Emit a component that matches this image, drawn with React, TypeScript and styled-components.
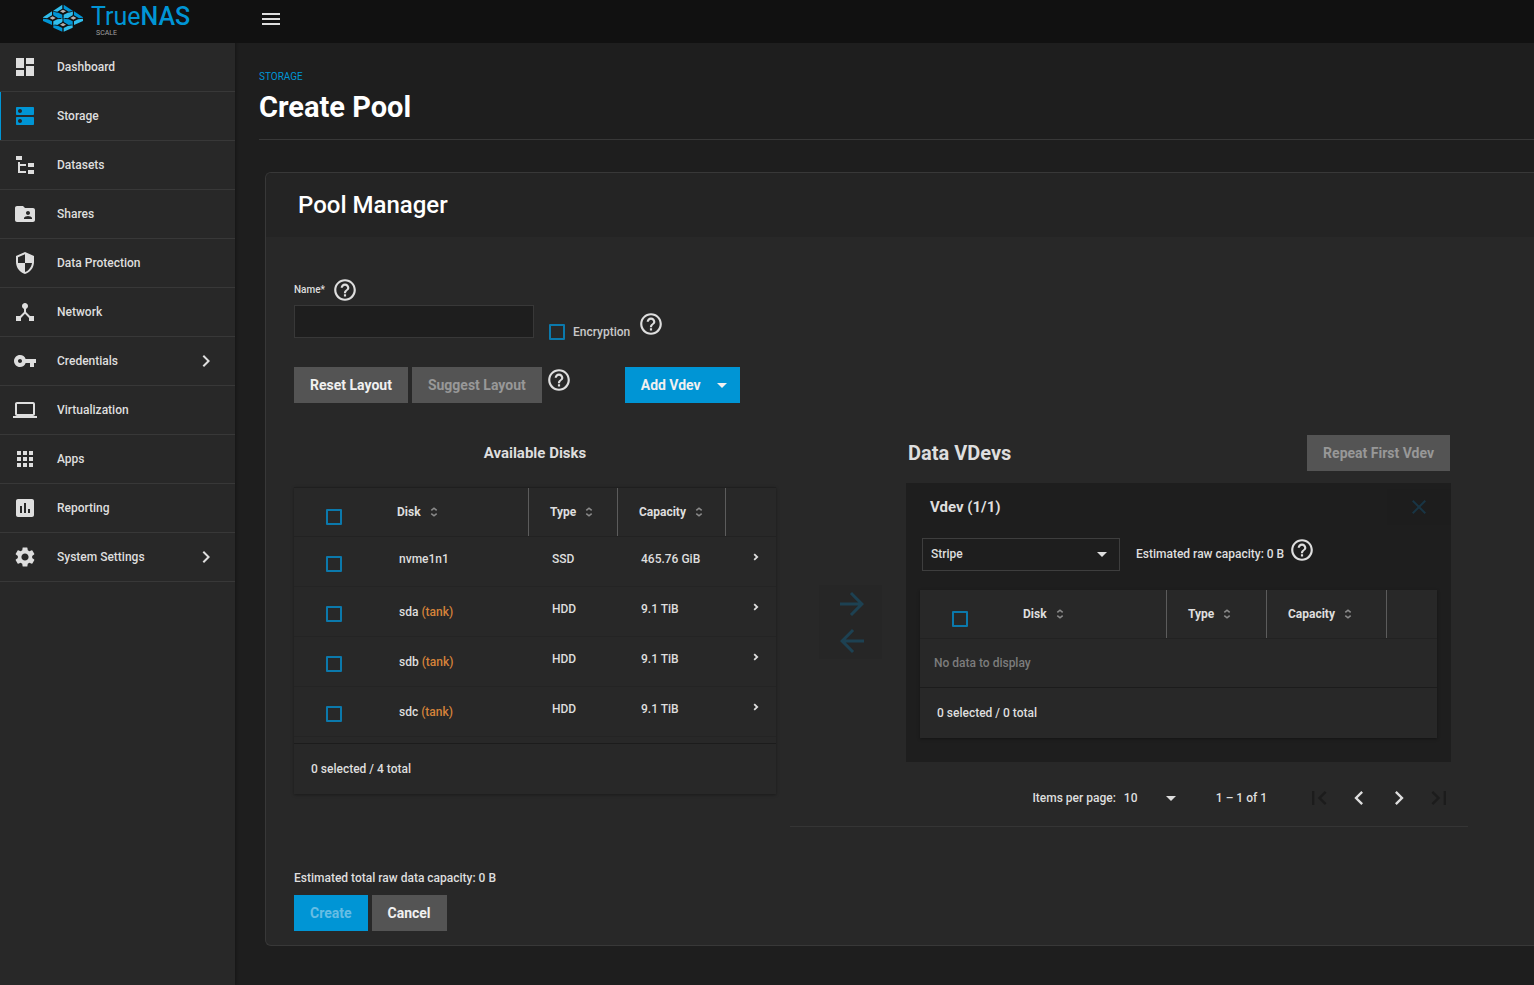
import React from 'react';
import styled, { createGlobalStyle, css } from 'styled-components';
import {
  MdApps,
  MdArrowBack,
  MdArrowDropDown,
  MdArrowForward,
  MdAssessment,
  MdChevronLeft,
  MdChevronRight,
  MdClose,
  MdDashboard,
  MdDeviceHub,
  MdDns,
  MdFirstPage,
  MdFolderShared,
  MdHelpOutline,
  MdLaptop,
  MdLastPage,
  MdMenu,
  MdSecurity,
  MdSettings,
  MdVpnKey,
} from 'react-icons/md';

const color = {
  bg1: '#1e1e1e',
  bg2: '#282828',
  bar: '#111111',
  line: '#383838',
  primary: '#0095d5',
  fg1: '#ffffff',
  fg2: '#dedede',
  button: '#545454',
  orange: '#d6833a',
};

const GlobalStyle = createGlobalStyle`
  *, *::before, *::after { box-sizing: border-box; }
  body {
    margin: 0;
    background: ${color.bg1};
    color: ${color.fg2};
    font: 500 12px/20px Roboto, "Liberation Sans", sans-serif;
    overflow-x: hidden;
  }
  button, input, select { font: inherit; color: inherit; }
  h1, h2, h3, p { margin: 0; }
`;

const Page = styled.div`
  display: flex;
  min-height: 100vh;
`;

const Sidebar = styled.aside`
  flex: none;
  width: 235px;
  background: ${color.bg2};
  box-shadow: 1px 0 3px rgba(0, 0, 0, 0.3);
`;

const LogoBar = styled.div`
  display: flex;
  height: 43px;
  padding: 4px 0 0 43px;
  gap: 8px;
  background: ${color.bar};
`;

const LogoMark = styled.svg`
  width: 40px;
  height: 28px;
`;

const Wordmark = styled.div`
  display: flex;
  flex-direction: column;
  color: ${color.primary};
  font-size: 25px;
  line-height: 26px;
  font-weight: 400;

  b { font-weight: 500; }
  small {
    padding-left: 5px;
    color: #a0a0a0;
    font-size: 7px;
    line-height: 6px;
  }
`;

const NavList = styled.ul`
  margin: 0;
  padding: 0;
  list-style: none;
`;

const NavLink = styled.a<{ $active?: boolean }>`
  display: flex;
  align-items: center;
  height: 49px;
  padding: 0 17px 0 13px;
  border-bottom: 1px solid ${color.line};
  box-shadow: ${(p) => (p.$active ? `inset 1px 0 ${color.primary}` : 'none')};
  color: ${color.fg2};
  text-decoration: none;

  svg:first-child { color: ${(p) => (p.$active ? color.primary : color.fg2)}; }
  span { flex: 1; padding-left: 20px; }
`;

const Content = styled.div`
  flex: 1;
  min-width: 0;
`;

const TopBar = styled.header`
  display: flex;
  align-items: center;
  height: 43px;
  padding: 0 24px 5px;
  background: ${color.bar};
`;

const PlainButton = styled.button`
  display: inline-flex;
  align-items: center;
  justify-content: center;
  padding: 0;
  border: 0;
  background: none;
`;

const Main = styled.main`
  padding: 24px 0 38px 24px;
`;

const PageHeader = styled.div`
  padding-bottom: 12px;
  border-bottom: 1px solid ${color.line};
`;

const Crumb = styled.a`
  display: block;
  color: ${color.primary};
  font-size: 10px;
  font-weight: 400;
  line-height: 20px;
  text-decoration: none;
`;

const PageTitle = styled.h1`
  color: ${color.fg1};
  font-size: 29px;
  font-weight: 700;
  line-height: 36px;
  padding: 2px 0;
`;

const Card = styled.section`
  margin: 32px 0 0 6px;
  border: 1px solid ${color.line};
  border-right: 0;
  border-radius: 6px 0 0 6px;
  background: ${color.bg2};
  overflow: hidden;
`;

const CardTitle = styled.h2`
  padding: 0 32px;
  background: #242424;
  color: ${color.fg1};
  font-size: 24px;
  font-weight: 500;
  line-height: 64px;
`;

const CardBody = styled.form`
  padding: 40px 66px 14px 28px;
`;

const FieldRow = styled.div`
  display: flex;
  align-items: flex-start;
  gap: 15px;
  margin-bottom: 25px;
`;

const NameField = styled.div`
  width: 240px;
`;

const LabelRow = styled.div`
  display: flex;
  align-items: center;
  gap: 7px;
  height: 26px;
  margin-bottom: 2px;
  font-size: 10px;
`;

const HelpButton = styled(PlainButton)`
  width: 26px;
  height: 26px;
`;

const TextInput = styled.input`
  display: block;
  width: 100%;
  height: 33px;
  padding: 0 8px;
  border: 1px solid ${color.line};
  background: ${color.bg1};
`;

const EncryptionField = styled.div`
  display: flex;
  padding-top: 34px;
  gap: 8px;
`;

const CheckLabel = styled.label`
  display: flex;
  align-items: center;
  gap: 8px;
  padding-top: 11px;
  height: 31px;
  color: #c8c8c8;
`;

const Checkbox = styled.input.attrs({ type: 'checkbox' })`
  appearance: none;
  flex: none;
  display: block;
  width: 16px;
  height: 16px;
  margin: 0;
  border: 2px solid #0b79ac;
  border-radius: 1px;
  &:checked { background: ${color.primary}; }
`;

const ButtonRow = styled.div`
  display: flex;
  gap: 4px;
`;

const Button = styled.button<{ $primary?: boolean }>`
  display: inline-flex;
  align-items: center;
  gap: 8px;
  height: 36px;
  padding: 0 16px;
  border: 0;
  background: ${(p) => (p.$primary ? color.primary : color.button)};
  color: #f0f0f0;
  font-size: 14px;
  font-weight: 700;
  white-space: nowrap;
  &:disabled { color: ${(p) => (p.$primary ? '#66bde4' : '#989898')}; }
`;

const AddVdev = styled(Button)`
  margin-left: 49px;
  padding-right: 6px;
  gap: 9px;
`;

const LayoutGrid = styled.div`
  display: grid;
  grid-template-columns: minmax(0, 482fr) minmax(0, 678fr);
  align-items: start;
  gap: 14px;
  margin-top: 32px;
`;

const DisksTitle = styled.h3`
  margin-bottom: 16px;
  font-size: 15px;
  font-weight: 700;
  line-height: 36px;
  text-align: center;
`;

const TableCard = styled.div<{ $topLine?: boolean }>`
  border-top: ${(p) => (p.$topLine ? '1px solid #1f1f1f' : '0')};
  background: ${color.bg2};
  box-shadow: 0 1px 3px rgba(0, 0, 0, 0.35);
`;

const Table = styled.table`
  width: 100%;
  table-layout: fixed;
  border-collapse: separate;
  border-spacing: 0;
`;

const Col = styled.col<{ $w?: number }>`
  ${(p) => p.$w && css`width: ${p.$w}px;`}
`;

const Th = styled.th<{ $divided?: boolean }>`
  height: 49px;
  padding: 0 0 0 21px;
  border-bottom: 1px solid #222222;
  text-align: left;
  font-weight: 700;
  position: relative;
  ${(p) =>
    p.$divided &&
    css`
      &::after {
        content: '';
        position: absolute;
        top: 0;
        right: 0;
        width: 1px;
        height: 48px;
        background: #5c5c5c;
      }
    `}
`;

const SortButton = styled(PlainButton)`
  gap: 9px;
  color: ${color.fg2};
  svg { color: #8a8a8a; }
`;

const CheckTh = styled(Th)`
  padding: 21px 0 0 32px;
  vertical-align: top;
`;

const Td = styled.td<{ $tall?: boolean }>`
  height: 50px;
  padding: 11px 0 0 23px;
  border-bottom: 1px solid #242424;
  line-height: ${(p) => (p.$tall ? 28 : 22)}px;
  vertical-align: top;
`;

const CheckTd = styled(Td)`
  padding: 19px 0 0 32px;
`;

const EmptyTd = styled.td`
  height: 48px;
  padding: 0 14px;
  color: #7c7c7c;
`;

const InUse = styled.span`
  color: ${color.orange};
`;

const TableFooter = styled.div<{ $gap?: boolean }>`
  margin-top: ${(p) => (p.$gap ? 6 : 0)}px;
  padding: 0 17px;
  border-top: 1px solid #1c1c1c;
  line-height: 50px;
`;

const VdevSection = styled.div`
  display: flex;
  gap: 24px;
  padding-left: 29px;
  border-bottom: 1px solid #353535;
`;

const MoveButtons = styled.div`
  display: flex;
  flex-direction: column;
  align-self: flex-start;
  flex: none;
  width: 63px;
  margin-top: 150px;
  background: #262626;
`;

const MoveButton = styled(PlainButton)`
  height: 37px;
  padding-left: 2px;
  &:disabled { color: #1d4152; }
`;

const VdevColumn = styled.div`
  flex: 1;
  min-width: 0;
`;

const VdevHeader = styled.div`
  display: flex;
  justify-content: space-between;
  align-items: center;
  padding: 0 18px 0 2px;
  margin-bottom: 12px;
`;

const VdevTitle = styled.h3`
  font-size: 20px;
  font-weight: 700;
  line-height: 36px;
`;

const VdevPanel = styled.div`
  margin-right: 17px;
  padding: 6px 14px 24px;
  background: ${color.bg1};
`;

const PanelHead = styled.div`
  display: flex;
  justify-content: space-between;
  align-items: center;
  height: 36px;
  padding-left: 10px;
  margin-right: -14px;
`;

const PanelTitle = styled.h3`
  font-size: 15px;
  font-weight: 700;
`;

const RemoveButton = styled(PlainButton)`
  width: 64px;
  height: 36px;
  background: #1d1d1d;
  color: #193544;
`;

const PanelControls = styled.div`
  display: flex;
  align-items: center;
  margin: 12px 0 19px 2px;
`;

const SelectWrap = styled.div`
  position: relative;
  svg {
    position: absolute;
    top: 4px;
    right: 6px;
    pointer-events: none;
  }
`;

const Select = styled.select`
  appearance: none;
  display: block;
  width: 198px;
  height: 33px;
  padding: 0 8px;
  border: 1px solid #3e3e3e;
  border-radius: 0;
  background: transparent;
`;

const Capacity = styled.div`
  display: flex;
  align-items: center;
  gap: 5px;
  margin-left: 16px;
  button { margin-bottom: 8px; }
`;

const Paginator = styled.nav`
  display: flex;
  align-items: center;
  justify-content: flex-end;
  height: 56px;
  margin-top: 8px;
  padding-right: 9px;
`;

const PageSize = styled.label`
  display: flex;
  align-items: center;
  gap: 8px;
  margin-right: 33px;
`;

const PageSizeSelect = styled(Select)`
  width: 59px;
  height: 24px;
  padding: 0;
  border: 0;
`;

const PageSizeWrap = styled(SelectWrap)`
  svg { top: 0; right: 0; }
`;

const PageButton = styled(PlainButton)`
  width: 40px;
  height: 40px;
  &:disabled { color: #1c1c1c; }
`;

const PageRange = styled.span`
  margin-right: 32px;
`;

const Total = styled.p`
  margin-top: 41px;
  margin-bottom: 7px;
`;

const tiles = [
  [60, 22],
  [29, 42],
  [91, 42],
  [60, 62],
];

const Logo = () => (
  <LogoMark viewBox="0 0 120 84" aria-hidden="true">
    {tiles.map(([x, y]) => (
      <g key={`${x}-${y}`} transform={`translate(${x} ${y})`}>
        <path d="M-29-2L-2-20V-8L-17 1L-29-1Z" fill="#31beec" />
        <path d="M2-20L29-2V-1L17 1L2-8Z" fill="#0095d5" />
        <path d="M-29 2L-14 4L-2 10V21L-29 9Z" fill="#0095d5" />
        <path d="M29 2L14 4L2 10V21L29 9Z" fill="#31beec" />
        <path d="M0-7L13 0L0 7L-13 0Z" fill="#111111" />
        <path d="M0-5L9 0L0 5L-9 0Z" fill="#b4b0ae" />
      </g>
    ))}
  </LogoMark>
);

const DatasetsIcon = () => (
  <svg width="24" height="24" viewBox="0 0 24 24" fill="currentColor" aria-hidden="true">
    <path d="M3 3h6v4H3zM5 9h2v2h6v2H7v5h6v2H5zM15 10h6v4h-6zM15 17h6v4h-6z" />
  </svg>
);

const SortIcon = () => (
  <svg width="8" height="10" viewBox="0 0 8 10" fill="none" stroke="currentColor" strokeWidth="1.6" aria-hidden="true">
    <path d="M1.3 3.4L4 1.2L6.7 3.4M1.3 6.6L4 8.8L6.7 6.6" />
  </svg>
);

const ExpandIcon = () => (
  <svg width="6" height="8" viewBox="0 0 6 8" fill="none" stroke="currentColor" strokeWidth="1.8" aria-hidden="true">
    <path d="M1.2 1.2L4.2 4L1.2 6.8" />
  </svg>
);

const ExpandButton = styled(PlainButton)`
  width: 14px;
  height: 18px;
  vertical-align: top;
`;

const Help = ({ about }: { about: string }) => (
  <HelpButton type="button" aria-label={`Help: ${about}`}>
    <MdHelpOutline size={26} />
  </HelpButton>
);

const navItems = [
  { label: 'Dashboard', icon: MdDashboard },
  { label: 'Storage', icon: MdDns, active: true },
  { label: 'Datasets', icon: DatasetsIcon },
  { label: 'Shares', icon: MdFolderShared },
  { label: 'Data Protection', icon: MdSecurity },
  { label: 'Network', icon: MdDeviceHub },
  { label: 'Credentials', icon: MdVpnKey, expandable: true },
  { label: 'Virtualization', icon: MdLaptop },
  { label: 'Apps', icon: MdApps },
  { label: 'Reporting', icon: MdAssessment },
  { label: 'System Settings', icon: MdSettings, expandable: true },
];

const disks = [
  { name: 'nvme1n1', type: 'SSD', capacity: '465.76 GiB' },
  { name: 'sda', pool: 'tank', type: 'HDD', capacity: '9.1 TiB' },
  { name: 'sdb', pool: 'tank', type: 'HDD', capacity: '9.1 TiB' },
  { name: 'sdc', pool: 'tank', type: 'HDD', capacity: '9.1 TiB' },
];

const Head = ({ label, widths }: { label: string; widths: number[] }) => (
  <>
    <colgroup>
      <Col $w={82} />
      <Col />
      <Col $w={widths[0]} />
      <Col $w={widths[1]} />
      <Col $w={50} />
    </colgroup>
    <thead>
      <tr>
        <CheckTh>
          <Checkbox aria-label={label} />
        </CheckTh>
        {['Disk', 'Type', 'Capacity'].map((name) => (
          <Th key={name} $divided>
            <SortButton type="button">
              {name}
              <SortIcon />
            </SortButton>
          </Th>
        ))}
        <Th />
      </tr>
    </thead>
  </>
);

export default function App() {
  return (
    <>
      <GlobalStyle />
      <Page>
        <Sidebar>
          <LogoBar>
            <Logo />
            <Wordmark>
              <span>
                True<b>NAS</b>
              </span>
              <small>SCALE</small>
            </Wordmark>
          </LogoBar>
          <nav>
            <NavList>
              {navItems.map(({ label, icon: Icon, active, expandable }) => (
                <li key={label}>
                  <NavLink href="#" $active={active}>
                    <Icon size={24} />
                    <span>{label}</span>
                    {expandable && <MdChevronRight size={24} />}
                  </NavLink>
                </li>
              ))}
            </NavList>
          </nav>
        </Sidebar>
        <Content>
          <TopBar>
            <PlainButton type="button" aria-label="Toggle menu">
              <MdMenu size={24} />
            </PlainButton>
          </TopBar>
          <Main>
            <PageHeader>
              <Crumb href="#">STORAGE</Crumb>
              <PageTitle>Create Pool</PageTitle>
            </PageHeader>
            <Card>
              <CardTitle>Pool Manager</CardTitle>
              <CardBody>
                <FieldRow>
                  <NameField>
                    <LabelRow>
                      <label htmlFor="pool-name">Name*</label>
                      <Help about="Name" />
                    </LabelRow>
                    <TextInput id="pool-name" />
                  </NameField>
                  <EncryptionField>
                    <CheckLabel>
                      <Checkbox />
                      Encryption
                    </CheckLabel>
                    <Help about="Encryption" />
                  </EncryptionField>
                </FieldRow>
                <ButtonRow>
                  <Button type="button">Reset Layout</Button>
                  <Button type="button" disabled>
                    Suggest Layout
                  </Button>
                  <Help about="Suggest Layout" />
                  <AddVdev type="button" $primary>
                    Add Vdev
                    <MdArrowDropDown size={24} />
                  </AddVdev>
                </ButtonRow>
                <LayoutGrid>
                  <section>
                    <DisksTitle>Available Disks</DisksTitle>
                    <TableCard $topLine>
                      <Table>
                        <Head label="Select all disks" widths={[89, 108]} />
                        <tbody>
                          {disks.map((disk) => (
                            <tr key={disk.name}>
                              <CheckTd>
                                <Checkbox aria-label={`Select ${disk.name}`} />
                              </CheckTd>
                              <Td $tall={Boolean(disk.pool)}>
                                {disk.name} {disk.pool && <InUse>({disk.pool})</InUse>}
                              </Td>
                              <Td>{disk.type}</Td>
                              <Td>{disk.capacity}</Td>
                              <Td>
                                <ExpandButton type="button" aria-label={`Details of ${disk.name}`}>
                                  <ExpandIcon />
                                </ExpandButton>
                              </Td>
                            </tr>
                          ))}
                        </tbody>
                      </Table>
                      <TableFooter $gap>0 selected / 4 total</TableFooter>
                    </TableCard>
                  </section>
                  <VdevSection>
                    <MoveButtons>
                      <MoveButton type="button" disabled aria-label="Add to vdev">
                        <MdArrowForward size={36} />
                      </MoveButton>
                      <MoveButton type="button" disabled aria-label="Remove from vdev">
                        <MdArrowBack size={36} />
                      </MoveButton>
                    </MoveButtons>
                    <VdevColumn>
                      <VdevHeader>
                        <VdevTitle>Data VDevs</VdevTitle>
                        <Button type="button" disabled>
                          Repeat First Vdev
                        </Button>
                      </VdevHeader>
                      <VdevPanel>
                        <PanelHead>
                          <PanelTitle>Vdev (1/1)</PanelTitle>
                          <RemoveButton type="button" aria-label="Remove vdev">
                            <MdClose size={24} />
                          </RemoveButton>
                        </PanelHead>
                        <PanelControls>
                          <SelectWrap>
                            <Select aria-label="Vdev type">
                              <option>Stripe</option>
                            </Select>
                            <MdArrowDropDown size={24} />
                          </SelectWrap>
                          <Capacity>
                            Estimated raw capacity: 0 B
                            <Help about="Estimated raw capacity" />
                          </Capacity>
                        </PanelControls>
                        <TableCard>
                          <Table>
                            <Head label="Select all vdev disks" widths={[100, 120]} />
                            <tbody>
                              <tr>
                                <EmptyTd colSpan={5}>No data to display</EmptyTd>
                              </tr>
                            </tbody>
                          </Table>
                          <TableFooter>0 selected / 0 total</TableFooter>
                        </TableCard>
                      </VdevPanel>
                      <Paginator aria-label="Vdev pages">
                        <PageSize>
                          Items per page:
                          <PageSizeWrap>
                            <PageSizeSelect>
                              <option>10</option>
                            </PageSizeSelect>
                            <MdArrowDropDown size={24} />
                          </PageSizeWrap>
                        </PageSize>
                        <PageRange>1 – 1 of 1</PageRange>
                        <PageButton type="button" disabled aria-label="First page">
                          <MdFirstPage size={28} />
                        </PageButton>
                        <PageButton type="button" aria-label="Previous page">
                          <MdChevronLeft size={28} />
                        </PageButton>
                        <PageButton type="button" aria-label="Next page">
                          <MdChevronRight size={28} />
                        </PageButton>
                        <PageButton type="button" disabled aria-label="Last page">
                          <MdLastPage size={28} />
                        </PageButton>
                      </Paginator>
                    </VdevColumn>
                  </VdevSection>
                </LayoutGrid>
                <Total>Estimated total raw data capacity: 0 B</Total>
                <ButtonRow>
                  <Button type="submit" $primary disabled>
                    Create
                  </Button>
                  <Button type="button">Cancel</Button>
                </ButtonRow>
              </CardBody>
            </Card>
          </Main>
        </Content>
      </Page>
    </>
  );
}
